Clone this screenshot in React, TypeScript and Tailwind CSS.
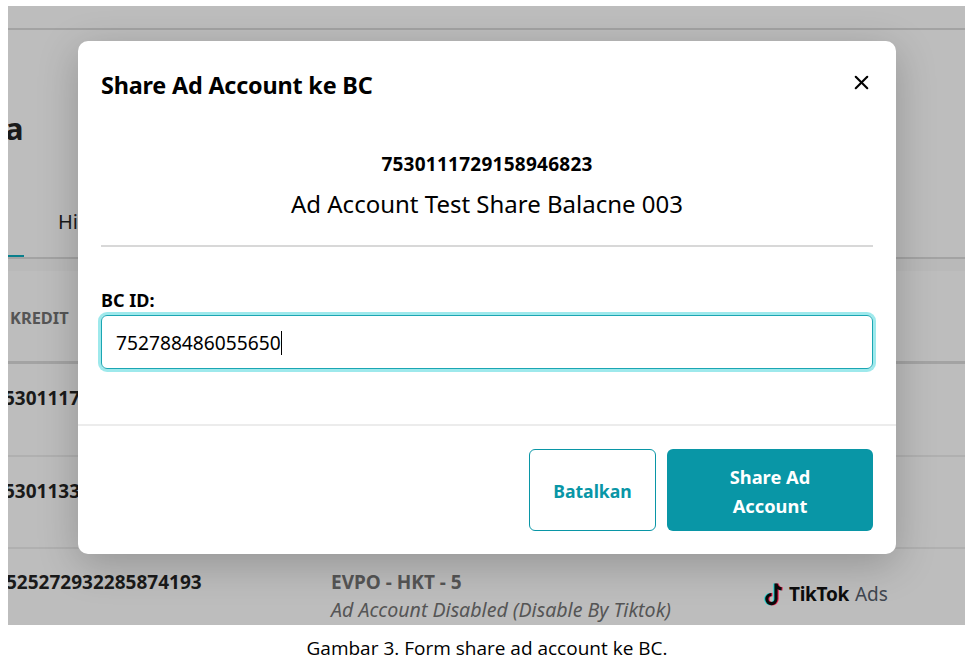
import { X } from "lucide-react";

function TikTokAds() {
  return (
    <div className="flex items-center">
      <svg width="22" height="26" viewBox="0 0 22 26" className="mr-[4px]">
        <path d="M13 2v15.5a4.6 4.6 0 1 1-4.6-4.6M13 2c.4 3 2.4 5 5.6 5.3" fill="none" stroke="#25d4d0" strokeWidth="3.4" transform="translate(-1 .6)" />
        <path d="M13 2v15.5a4.6 4.6 0 1 1-4.6-4.6M13 2c.4 3 2.4 5 5.6 5.3" fill="none" stroke="#e8204f" strokeWidth="3.4" transform="translate(1 .6)" />
        <path d="M13 2v15.5a4.6 4.6 0 1 1-4.6-4.6M13 2c.4 3 2.4 5 5.6 5.3" fill="none" stroke="#0b0b0b" strokeWidth="3.2" transform="translate(0 .6)" />
      </svg>
      <span className="text-[19px] leading-none font-bold tracking-[-0.3px] text-[#0d0d0d]">TikTok</span>
      <span className="ml-[6px] text-[19px] leading-none text-[#3f4650]">Ads</span>
    </div>
  );
}

export default function App() {
  return (
    <div className="relative h-[665px] w-[976px] overflow-hidden bg-white font-['Noto_Sans',sans-serif]">
      {/* Dimmed page behind the dialog */}
      <div className="ml-2 mt-[6px] h-[619px] w-[957px] overflow-hidden bg-[#bdbdbd] text-[#1a1a1a]">
        <div className="h-[24px] border-b-2 border-[#a3a3a3]" />
        <div className="flex h-[229px] flex-col border-b-2 border-[#a3a3a3]">
          <p className="mt-[83px] -ml-[3px] text-[31px] leading-none font-bold">a</p>
          <div className="mt-auto flex items-end">
            <div className="h-[2px] w-4 bg-[#0a7f8c]" />
            <span className="mb-[25px] ml-[34px] text-[20px] leading-none">Hi</span>
          </div>
        </div>
        <div className="h-[12px] bg-[#b9b9b9]" />
        <div className="flex h-[93px] items-center border-b-[3px] border-[#a3a3a3] pt-[4px] pl-[2px] text-[16.4px] font-bold text-[#555]">
          KREDIT
        </div>
        <div className="flex h-[93px] border-b-2 border-[#b0b0b0] pt-[20px] text-[19px] font-bold">
          <span className="-ml-[4px]">5301117</span>
        </div>
        <div className="flex h-[92px] border-b-2 border-[#b0b0b0] pt-[20px] text-[19px] font-bold">
          <span className="-ml-[4px]">5301133</span>
        </div>
        <div className="flex pt-[21px]">
          <span className="-ml-[2px] w-[325px] text-[19px] leading-[24px] font-bold">525272932285874193</span>
          <div>
            <p className="text-[19px] leading-[24px] font-bold text-[#555]">EVPO - HKT - 5</p>
            <p className="mt-[4px] text-[19.6px] leading-[24px] text-[#555] italic">Ad Account Disabled (Disable By Tiktok)</p>
          </div>
          <div className="ml-[92px] pt-[11px]">
            <TikTokAds />
          </div>
        </div>
      </div>

      {/* Dialog */}
      <div className="absolute top-[41px] left-[78px] flex h-[513px] w-[818px] flex-col rounded-[10px] bg-white shadow-[0_10px_40px_rgba(0,0,0,0.22)]">
        <div className="flex h-[84px] items-start justify-between px-[23px] pt-[27px]">
          <h2 className="text-[23.4px] leading-[34px] font-bold tracking-[-0.2px] text-black">Share Ad Account ke BC</h2>
          <X className="mt-[3px] size-[23px] text-black" strokeWidth={2.2} />
        </div>
        <div className="mx-[23px] flex h-[122px] flex-col items-center border-b-2 border-[#d8d8d8] pt-[26px]">
          <p className="text-[19px] leading-[26px] font-bold tracking-[0.25px] text-black">7530111729158946823</p>
          <p className="mt-[12px] text-[24px] leading-[30px] text-black">Ad Account Test Share Balacne 003</p>
        </div>
        <div className="flex-1 px-[23px] pt-[40px]">
          <label className="block text-[18px] leading-[26px] font-bold text-black">BC ID:</label>
          <div className="mt-[2px] flex h-[54px] items-center rounded-[6px] border-[1.5px] border-[#1ba6b3] pt-[2px] pl-[14px] text-[19.2px] text-black shadow-[0_0_0_3px_rgba(125,226,229,0.75)]">
            752788486055650
            <span className="h-[24px] w-px bg-black" />
          </div>
        </div>
        <div className="flex h-[130px] justify-end gap-[11px] border-t-2 border-[#ececec] px-[23px] pt-[23px]">
          <button className="h-[82px] w-[127px] rounded-[6px] border border-[#0996a6] bg-white pt-[3px] text-[17.6px] font-bold text-[#0996a6]">
            Batalkan
          </button>
          <button className="h-[82px] w-[206px] rounded-[6px] bg-[#0996a6] px-[40px] pt-[2px] text-[18.3px] leading-[29px] font-bold text-white">
            Share Ad Account
          </button>
        </div>
      </div>

      <p className="absolute top-[636px] left-0 w-[974px] text-center font-['Open_Sans',sans-serif] text-[19px] leading-[25px] text-black">
        Gambar 3. Form share ad account ke BC.
      </p>
    </div>
  );
}
